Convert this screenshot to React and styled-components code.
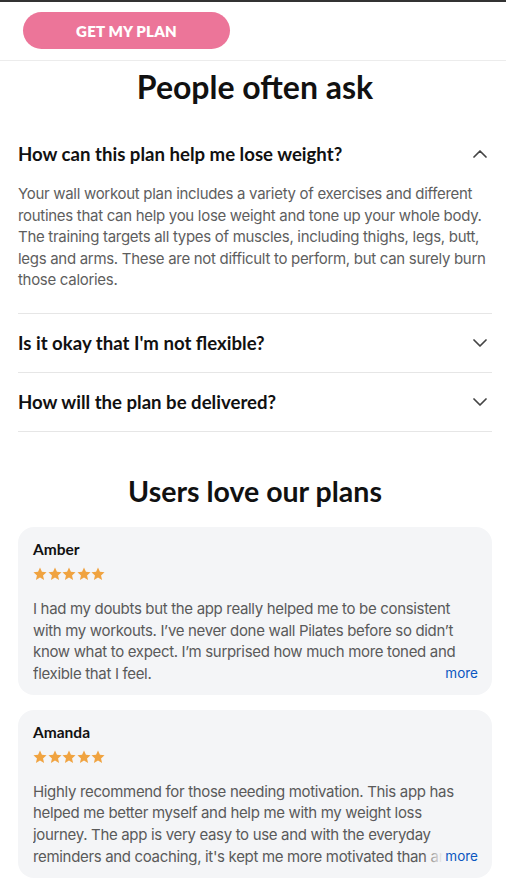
import React, { useState } from 'react';
import styled, { createGlobalStyle, css } from 'styled-components';

const GlobalStyle = createGlobalStyle`
  * { box-sizing: border-box; }
  body {
    margin: 0;
    background: #fff;
    font-family: Inter, 'Liberation Sans', sans-serif;
    color: #111;
  }
`;

const Page = styled.div`
  width: 100%;
  border-top: 2px solid #333;
`;

const Header = styled.header`
  height: 59px;
  display: flex;
  align-items: center;
  padding: 0 23px;
  border-bottom: 1px solid #ececec;
`;

const PlanButton = styled.button`
  width: 207px;
  height: 37px;
  border: none;
  border-radius: 19px;
  background: #ec7599;
  color: #fff;
  font-family: Lato, 'Liberation Sans', sans-serif;
  font-weight: 800;
  font-size: 15px;
  letter-spacing: 0.2px;
  margin-top: -1px;
`;

const Content = styled.main`
  padding: 0 14px 0 18px;
`;

const SectionTitle = styled.h2`
  margin: ${({ top }) => top}px 0 ${({ bottom }) => bottom}px;
  text-align: center;
  font-family: Lato, 'Liberation Sans', sans-serif;
  font-weight: 700;
  font-size: ${({ size }) => size}px;
  line-height: 36px;
  color: #111;
`;

const FaqItem = styled.div`
  border-bottom: 1px solid #e6e6e6;
`;

const Question = styled.div`
  display: flex;
  align-items: center;
  justify-content: space-between;
  padding: 18px 5px 18px 0;
  cursor: pointer;
  font-family: Lato, 'Liberation Sans', sans-serif;
  font-weight: 700;
  font-size: 18.6px;
  line-height: 22px;
  color: #111;
`;

const Chevron = styled.svg`
  width: 14px;
  height: 8px;
  flex-shrink: 0;
  ${({ open }) =>
    open &&
    css`
      transform: rotate(180deg);
    `}
`;

const Answer = styled.p`
  margin: 0;
  padding: 0 0 22px 0;
  font-size: 15px;
  letter-spacing: -0.3px;
  line-height: 21.6px;
  color: #5e5e5e;
`;

const Reviews = styled.div`
  display: flex;
  flex-direction: column;
  gap: 15px;
`;

const Card = styled.div`
  background: #f4f5f7;
  border-radius: 16px;
  padding: 13px 14px 10px 15px;
`;

const Name = styled.div`
  font-family: Lato, 'Liberation Sans', sans-serif;
  font-weight: 700;
  font-size: 15.5px;
  line-height: 18px;
  color: #111;
`;

const Stars = styled.div`
  display: flex;
  gap: 0.5px;
  margin: 9px 0 17px;
  height: 14px;
`;

const TextWrap = styled.div`
  position: relative;
`;

const ReviewText = styled.p`
  margin: 0;
  font-size: 15px;
  letter-spacing: -0.33px;
  line-height: 21.7px;
  color: #5a5a5a;
  display: -webkit-box;
  -webkit-line-clamp: 4;
  -webkit-box-orient: vertical;
  overflow: hidden;
`;

const More = styled.span`
  position: absolute;
  right: 0;
  bottom: 0;
  padding-left: 22px;
  font-size: 13.5px;
  line-height: 21.7px;
  color: #0b57c0;
  background: linear-gradient(to right, rgba(244, 245, 247, 0), #f4f5f7 20px);
`;

const faqs = [
  {
    q: 'How can this plan help me lose weight?',
    a: 'Your wall workout plan includes a variety of exercises and different routines that can help you lose weight and tone up your whole body. The training targets all types of muscles, including thighs, legs, butt, legs and arms. These are not difficult to perform, but can surely burn those calories.',
  },
  { q: "Is it okay that I'm not flexible?", a: '' },
  { q: 'How will the plan be delivered?', a: '' },
];

const reviews = [
  {
    name: 'Amber',
    text: 'I had my doubts but the app really helped me to be consistent with my workouts. I\u2019ve never done wall Pilates before so didn\u2019t know what to expect. I\u2019m surprised how much more toned and flexible that I feel.',
  },
  {
    name: 'Amanda',
    text: "Highly recommend for those needing motivation. This app has helped me better myself and help me with my weight loss journey. The app is very easy to use and with the everyday reminders and coaching, it's kept me more motivated than any other app I have tried.",
  },
];

const ChevronIcon = ({ open }) => (
  <Chevron open={open} viewBox="0 0 14 8" fill="none">
    <path d="M1 1l6 6 6-6" stroke="#444" strokeWidth="1.7" strokeLinecap="round" strokeLinejoin="round" />
  </Chevron>
);

const Star = () => (
  <svg width="14" height="14" viewBox="0 0 24 24">
    <path
      d="M12 1l3.3 7.3 7.9.8-6 5.3 1.8 7.8L12 18.1l-7 4.1 1.8-7.8-6-5.3 7.9-.8z"
      fill="#f0a340"
    />
  </svg>
);

const App = () => {
  const [openIndex, setOpenIndex] = useState(0);

  return (
    <>
      <GlobalStyle />
      <Page>
        <Header>
          <PlanButton>GET MY PLAN</PlanButton>
        </Header>
        <Content>
          <SectionTitle top={8} bottom={20} size={32}>
            People often ask
          </SectionTitle>
          {faqs.map(({ q, a }, index) => (
            <FaqItem key={q}>
              <Question onClick={() => setOpenIndex(openIndex === index ? -1 : index)}>
                {q}
                <ChevronIcon open={openIndex === index} />
              </Question>
              {openIndex === index && a && <Answer>{a}</Answer>}
            </FaqItem>
          ))}
          <SectionTitle top={41} bottom={18} size={28.5}>
            Users love our plans
          </SectionTitle>
          <Reviews>
            {reviews.map(({ name, text }) => (
              <Card key={name}>
                <Name>{name}</Name>
                <Stars>
                  {[0, 1, 2, 3, 4].map((i) => (
                    <Star key={i} />
                  ))}
                </Stars>
                <TextWrap>
                  <ReviewText>{text}</ReviewText>
                  <More>more</More>
                </TextWrap>
              </Card>
            ))}
          </Reviews>
        </Content>
      </Page>
    </>
  );
};

export default App;
